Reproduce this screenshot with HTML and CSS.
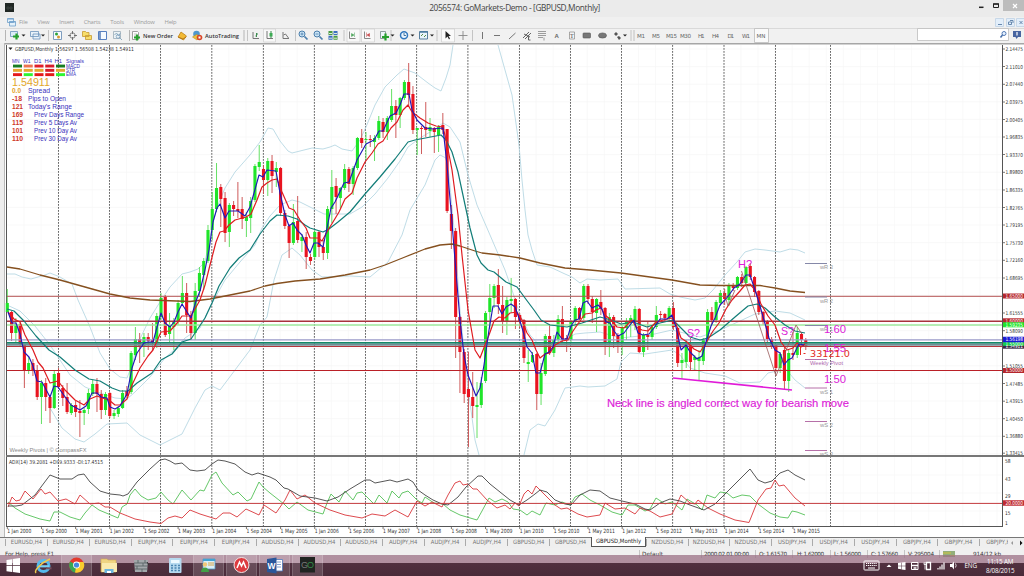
FILE: index.html
```html
<!DOCTYPE html>
<html lang="en">
<head>
<meta charset="utf-8">
<title>2056574: GoMarkets-Demo - [GBPUSD,Monthly]</title>
<link rel="stylesheet" href="styles.css">
</head>
<body>
<div class="app">
  <header class="titlebar">
    <svg class="app-icon" width="9" height="9" viewBox="0 0 9 9"><rect width="9" height="9" fill="#202724"/><path d="M2 4h2v2H2zM5 4h2v2H5z" fill="none" stroke="#47524d" stroke-width=".6"/></svg>
    <h1 class="title">2056574: GoMarkets-Demo - [GBPUSD,Monthly]</h1>
    <svg class="window-buttons" width="49" height="12" viewBox="975 0 49 12"><path d="M979 7.3h4.500" stroke="#222" stroke-width="1.500"/><path d="M993.500 4h5v3.500h-5z" fill="none" stroke="#222"/><path d="M993 4h6" stroke="#222" stroke-width="1.400"/><rect x="1003" y="0" width="21" height="11" fill="#bcbcbc"/><path d="M1013 4l4 4m0-4l-4 4" stroke="#fff" stroke-width="1.200"/></svg>
  </header>
  <nav class="menubar">
    <svg class="mdi-icon" width="9" height="9" viewBox="0 0 9 9"><path d="M.5.5h6v4h-6zM2.500 3.500h6v4.500h-6z" fill="#e4f1fa" stroke="#6f9fc8" stroke-width=".8"/><path d="M.5 1h6M2.500 4h6" stroke="#6fa0cf"/></svg>
    <span>File</span><span>View</span><span>Insert</span><span>Charts</span><span>Tools</span><span>Window</span><span>Help</span>
    <svg class="mdi-buttons" width="29" height="9" viewBox="995 17 29 9"><path d="M995.500 17.500h8v8h-8zM1006.500 17.500h8v8h-8zM1016.500 17.500h8v8h-8z" fill="#e2eefa" stroke="#bfd2e5" stroke-width=".8"/><path d="M998 23.500h4M1010 19.500h3v2.500M1008.500 21h3v2.500h-3zM1019.500 20l3 3m0-3l-3 3" fill="none" stroke="#5b7da5" stroke-width=".9"/></svg>
  </nav>
  <div class="toolbar">
    <svg class="group" width="245" height="15" viewBox="0 28 245 15">
      <path d="M5.500 30v11M129.500 30v11M244 30v11" stroke="#b5b5b5"/>
      <path d="M10.500 31.500h7v5h-7z" fill="#dcecf8" stroke="#6b93bb" stroke-width=".8"/><path d="M13 36.500h6M16.500 33.500v6" stroke="#27a02d" stroke-width="2.200"/>
      <path d="M21.500 34.500h4l-2 2zM41 34.500h4l-2 2z" fill="#222"/>
      <path d="M30.500 31.500h8v5h-8zM33 34h7v5h-7z" fill="#e8f2fa" stroke="#6b93bb" stroke-width=".8"/>
      <path d="M48.500 30v11" stroke="#c4c4c4"/>
      <path d="M53.500 31.500h8v8h-8z" fill="#f6fbff" stroke="#7e9dbe"/><circle cx="56.500" cy="34" r="1.500" fill="#2ba339"/><circle cx="58.500" cy="37" r="1.500" fill="#d99a31"/>
      <circle cx="72.500" cy="35.500" r="2.700" fill="none" stroke="#777" stroke-width=".9"/><path d="M72.500 31v3m0 3v3M68 35.500h3m3 0h3" stroke="#666" stroke-width=".9"/>
      <path d="M82.500 31.500h3l1 1h2.500v4h-6.500zM85.500 35.500h6v4h-6z" fill="#f8de6a" stroke="#c69b31" stroke-width=".8"/>
      <path d="M98.500 31.500h8v8h-8z" fill="#f5faff" stroke="#567fc0"/><path d="M100 32v7" stroke="#5279b5" stroke-width="1.500"/>
      <path d="M113.500 31.500h7v7h-7z" fill="#edf3f6" stroke="#9aabb7" stroke-width=".8"/><path d="M114.500 35l2-2 2 3 2-3M119 37l3 3" fill="none" stroke="#8eabc0"/><circle cx="118" cy="36.500" r="1.800" fill="none" stroke="#7fa2c0" stroke-width=".8"/>
      <path d="M132.500 31.500h5l1 1v7h-6z" fill="#fff" stroke="#888" stroke-width=".8"/><path d="M134 34h3m-3 2h2" stroke="#999" stroke-width=".6"/><path d="M134 37.500h6M137 34.500v6" stroke="#27a02d" stroke-width="2.200"/>
      <text x="143" y="37.800" textLength="30" lengthAdjust="spacingAndGlyphs" class="tool-text">New Order</text>
      <path d="M178 37l3-5 5.500 4-3 4z" fill="#f2ba35" stroke="#bc8118" stroke-width=".8"/><path d="M178 37l5 2 3-2" fill="none" stroke="#a96b11" stroke-width=".8"/>
      <circle cx="196.500" cy="34" r="3.300" fill="#4f98cd"/><path d="M192.500 37l4-2.500 4 2-3.500 3.500z" fill="#ecc23e" stroke="#b78a20" stroke-width=".6"/><circle cx="199.500" cy="37.500" r="2.800" fill="#d94628"/><path d="M198.500 36.500h2v2h-2z" fill="#fff"/>
      <text x="205" y="37.800" textLength="34" lengthAdjust="spacingAndGlyphs" class="tool-text">AutoTrading</text>
    </svg>
    <svg class="group" width="195" height="15" viewBox="245 28 195 15">
      <path d="M247.500 30v11M295.500 30v11M344 30v11M391 30v11M437 30v11" stroke="#c0c0c0" stroke-width=".9"/>
      <path d="M263.500 29h12v13h-12zM347 29h13v13h-13zM361.500 29h13v13h-13z" fill="#f8f8f8" stroke="#cfcfcf" stroke-width=".7"/>
      <path d="M253 32v6.500h6" fill="none" stroke="#777"/><path d="M256.500 33v4M255.500 36h1M256.500 34h1.500" stroke="#3d8b50"/>
      <path d="M267 31v7.500h6" fill="none" stroke="#777"/><path d="M271 31v7" stroke="#358b48"/><path d="M269.500 33h3v3.500h-3z" fill="#3dab54"/>
      <path d="M283 32v6.500h6M283.500 35l2-1 3 4" fill="none" stroke="#777"/>
      <g fill="#cae4f5" stroke="#4b7fad"><circle cx="302" cy="34" r="3"/><path d="M304.500 36.500l3 3" stroke-width="1.700"/><circle cx="317" cy="34" r="3"/><path d="M319.500 36.500l3 3" stroke-width="1.700"/><path d="M300.500 34h3m-1.500-1.500v3M315.500 34h3" stroke-width=".8"/></g>
      <path d="M328.500 31h4v4h-4zM333.500 35.800h4v4h-4z" fill="#499a43"/><path d="M333.500 31h4v4h-4zM328.500 35.800h4v4h-4z" fill="#3c70bf"/><path d="M329 33.500h3m2 0h3m-8 4.700h3m2 0h3" stroke="#dcebd7"/>
      <path d="M349.500 31.500V38.500h6M364.500 31.500V38.500h6" fill="none" stroke="#888"/><path d="M351.500 33.500l2.500 1.500-2.500 1.500zM354.500 32.500v4.500" fill="#48a357" stroke="#48a357" stroke-width=".5"/><path d="M369.500 33.500l-2.500 1.500 2.500 1.500zM366.500 32.500v4.500" fill="#c54245" stroke="#c54245" stroke-width=".5"/>
      <path d="M380.500 31.500h5v7h-5z" fill="#eff5fb" stroke="#788" stroke-width=".8"/><path d="M382 37h7M385.500 33.500v7" stroke="#27a02d" stroke-width="2.200"/>
      <circle cx="404" cy="35.300" r="3.500" fill="#eaf5ff" stroke="#3378bd" stroke-width="1.500"/><path d="M404 33v2.500h2" fill="none" stroke="#245989" stroke-width=".8"/>
      <path d="M419.500 31.500h8v7.500h-8z" fill="#e9f4fb" stroke="#577f9e"/><path d="M420 32h8" stroke="#487aa0" stroke-width="1.500"/><path d="M421 36l2-2m1 3 2-2" stroke="#578d4a"/>
      <path d="M390.500 34.500h4l-2 2zM410.500 34.500h4l-2 2zM430 34.500h4l-2 2z" fill="#222"/>
    </svg>
    <svg class="group" width="192" height="15" viewBox="440 28 192 15">
      <path d="M441.500 29h13v13h-13z" fill="#fafafa" stroke="#cdcdcd" stroke-width=".7"/><path d="M445.500 31v7.500l2-2 1.500 3 1-1-1.500-2.500h2.500z" fill="#222"/>
      <path d="M463 31v9M458.500 35.500h9" stroke="#888" stroke-width=".9"/><path d="M472.500 30v11M631 30v11" stroke="#c4c4c4"/>
      <path d="M482.500 32v7M494 35.500h6M509 39l6.500-6" stroke="#666" stroke-width=".9"/>
      <path d="M523 38l6-6M525 39l6-6M524 34l6 3M528.500 36.500v3.500h2" fill="none" stroke="#555" stroke-width=".9"/>
      <path d="M538 31.500h8M538 33.500h8M538 35.500h8M538 37.500h5M544 37.500v3" stroke="#777" stroke-width=".7"/>
      <text x="554.500" y="38" class="tool-glyph">A</text><path d="M569.500 32h5v7h-5z" fill="#f4f4f4" stroke="#888" stroke-width=".7"/><text x="570" y="38" class="tool-small">T</text>
      <rect x="583" y="33" width="7.500" height="5" rx=".8" fill="#777" stroke="#555" stroke-width=".6"/><ellipse cx="602.500" cy="35.500" rx="4" ry="2.600" fill="#777" stroke="#555" stroke-width=".6"/>
      <path d="M614 34l2-2 2 2-2 2zM617 37l2-1 2 2-2 2z" fill="#555"/><path d="M623 34.500h4l-2 2z" fill="#222"/>
    </svg>
    <svg class="group" width="140" height="15" viewBox="632 28 140 15">
      <path d="M634 30v11" stroke="#c0c0c0"/><path d="M754.500 28.500h14v14h-14z" fill="#fafafa" stroke="#bbb" stroke-width=".8"/>
      <g class="period"><text x="637" y="37.500" textLength="8">M1</text><text x="652" y="37.500" textLength="8">M5</text><text x="666" y="37.500" textLength="11">M15</text><text x="680" y="37.500" textLength="11">M30</text><text x="698" y="37.500" textLength="6.500">H1</text><text x="712" y="37.500" textLength="7">H4</text><text x="727.500" y="37.500" textLength="6.500">D1</text><text x="742" y="37.500" textLength="8">W1</text><text x="756.500" y="37.500" textLength="9">MN</text></g>
    </svg>
    <svg class="group search" width="107" height="15" viewBox="917 28 107 15"><path d="M917.500 28.500h91v12h-91z" fill="#fff" stroke="#bdbdbd" stroke-width=".8"/><circle cx="1004" cy="33.500" r="2" fill="#e6f2ff" stroke="#5379b5"/><path d="M1002.500 35l-2 2.500" stroke="#456da8" stroke-width="1.500"/><path d="M1013 31h8v6h-3l-1.500 2-1-2H1013z" fill="#4865a0"/><path d="M1017 32v3.500" stroke="#fff" stroke-width="1.200"/></svg>
  </div>
  <main><svg id="chart" class="chart" width="1024" height="495" viewBox="0 43 1024 495"></svg></main>
  <div class="tabs">
    <div class="tabs-left"><span>EURUSD,H4</span><span>EURUSD,H4</span><span>EURUSD,H4</span><span>EURJPY,H4</span><span>EURJPY,H4</span><span>EURJPY,H4</span><span>AUDUSD,H4</span><span>AUDUSD,H4</span><span>AUDUSD,H4</span><span>AUDJPY,H4</span><span>AUDJPY,H4</span><span>AUDJPY,H4</span><span>GBPUSD,H4</span><span>GBPUSD,H4</span></div>
    <b class="tab-active">GBPUSD,Monthly</b>
    <div class="tabs-right"><span>NZDUSD,H4</span><span>NZDUSD,H4</span><span>NZDUSD,H4</span><span>USDJPY,H4</span><span>USDJPY,H4</span><span>USDJPY,H4</span><span>GBPJPY,H4</span><span>GBPJPY,H4</span><span>GBPJPY,H4</span></div>
    <svg class="tab-arrows" width="15" height="10" viewBox="0 0 15 10"><path d="M4 3v4L2 5z" fill="#999"/><path d="M11 2.500v5L13.500 5z" fill="#111"/></svg>
  </div>
  <footer class="status">
    <svg width="1024" height="15" viewBox="0 548 1024 15" class="status-text">
      <text x="5" y="556" textLength="49">For Help, press F1</text><text x="642" y="556" textLength="21">Default</text><text x="704" y="556" textLength="45">2000.02.01 00:00</text><text x="759" y="556" textLength="28">O: 1.61570</text><text x="797" y="556" textLength="27">H: 1.62000</text><text x="834" y="556" textLength="27">L: 1.56000</text><text x="871" y="556" textLength="27">C: 1.57660</text><text x="908" y="556" textLength="26">V: 295004</text><text x="973" y="556" textLength="28">914/12 kb</text>
      <path d="M639.500 550v8M701.500 550v8M755.500 550v8M792.500 550v8M830.500 550v8M867.500 550v8M904.500 550v8M939.500 550v8" stroke="#c4c4c4"/>
      <path d="M944 551v6m2-6v6m2-6v6m2-6v6m2-6v6m2-6v6" stroke="#55832d" stroke-width="1.200"/><path d="M943 553h8m-1 2.500h5" stroke="#d2c43c"/>
    </svg>
  </footer>
  <div class="taskbar">
    <svg width="325" height="21" viewBox="0 555 325 21">
      <path d="M61 555h31v21H61zM193 555h31v21h-31zM226 555h31v21h-31zM259 555h31v21h-31zM292 555h31v21h-31z" fill="#fff" opacity=".14"/><path d="M61.500 555v21M91.500 555v21M193.500 555v21M223.500 555v21M226.500 555v21M256.500 555v21M259.500 555v21M289.500 555v21M292.500 555v21M322.500 555v21" stroke="#fff" opacity=".22" stroke-width=".7"/>
      <path d="M6.500 560l5.500-.8v6H6.500zM12.700 559l7.300-1v7.200h-7.300zM6.500 566h5.500v6l-5.500-.8zM12.700 566H20v7l-7.300-1z" fill="#fff"/>
      <circle cx="43.500" cy="566" r="5.500" fill="none" stroke="#55b9ec" stroke-width="3"/><path d="M39 566.300h10" stroke="#79d1f5" stroke-width="2.200"/><path d="M46 568.300h5.500" stroke="#74505f" stroke-width="2"/><path d="M36 573c-2-2 4-10 14-14" fill="none" stroke="#efc84d" stroke-width="1.500"/>
      <circle cx="76.500" cy="565" r="7.500" fill="#e33a2c"/><path d="M76.500 565L70 561.500A7.500 7.500 0 0 0 75.500 572.500z" fill="#36a852"/><path d="M76.500 565L75 572.500A7.500 7.500 0 0 0 83.500 562H77z" fill="#f8cd2e"/><circle cx="76.500" cy="565" r="3.400" fill="#fff"/><circle cx="76.500" cy="565" r="2.600" fill="#4289dd"/>
      <path d="M101 559h6l1 1h8v12h-15z" fill="#efd482" stroke="#d0a950" stroke-width=".6"/><path d="M102 563h15v9h-15z" fill="#faeaae"/><path d="M104.500 569h9v4h-9z" fill="#6cb5de"/><path d="M107 571h4v2h-4z" fill="#fff"/>
      <path d="M134 560h14l-1 12h-12z" fill="#a3a8ab"/><path d="M134 563h14m-14 3h14m-13 3h13M138 560v3m5 0v3m-6 0v3m5 0v3m3-12v3" stroke="#5a6468" stroke-width=".9"/><path d="M147 562l2 3m-15 5l-1 1" stroke="#333"/>
      <rect x="169" y="558" width="12.500" height="15" rx="1" fill="#b6d9ef"/><path d="M171 560h8.500v3H171z" fill="#eef9ff"/><path d="M171 565.500h2m1.500 0h2m1.500 0h2m-9 2.500h2m1.500 0h2m1.500 0h2m-9 2.500h2m1.500 0h2m1.500 0h2" stroke="#4a83b0" stroke-width="1.300"/>
      <path d="M203 559h12v10h-12z" fill="#d9eff9" stroke="#4e97c3" stroke-width=".8"/><path d="M203 560h12" stroke="#42a3d4" stroke-width="2"/><path d="M208 563h6m-6 2h6" stroke="#d8a54b"/><circle cx="205" cy="564.500" r="2.200" fill="#f0c778"/><path d="M201 572c0-6 8-6 8 0z" fill="#42a045"/>
      <circle cx="241.500" cy="565" r="7.500" fill="#dc3b40" stroke="#f2e5e5"/><path d="M237 568l2.500-6 2 4 2-4 2.500 6" fill="none" stroke="#fff" stroke-width="1.500"/>
      <path d="M275 559.500h7.500v11.500H275z" fill="#fff" stroke="#4c78bb" stroke-width=".8"/><path d="M277 562h4m-4 2.500h4m-4 2.500h4" stroke="#6489c1" stroke-width=".8"/><path d="M267 559l9.500-1.500v16l-9.500-1.500z" fill="#2b579a"/><text x="267.600" y="568.800" class="word">W</text>
      <rect x="300" y="557" width="15" height="15.500" fill="#202421"/><text x="301" y="568" textLength="13" class="go"><tspan fill="#777">G</tspan><tspan fill="#348b4a">O</tspan></text>
    </svg>
    <svg class="tray" width="165" height="21" viewBox="859 555 165 21">
      <rect x="864" y="561" width="15" height="9" rx=".7" fill="none" stroke="#fff"/><path d="M866 563.500h11m-11 2h11" stroke="#fff" stroke-dasharray="1.200 .7"/><path d="M868 568h7" stroke="#fff"/>
      <path d="M886.500 567l2.500-2.500 2.500 2.500z" fill="#fff"/><path d="M898 563l3-.5v3.200h-3zM901.500 562.400l4-.5v3.800h-4zM898 566.200h3v3l-3-.4zM901.500 566.200h4v3.800l-4-.6z" fill="#fff"/>
      <path d="M911.500 562.500h6.500v7h-6.500z" fill="none" stroke="#fff"/><path d="M911.500 565.500h6.500M913.500 568h3" fill="none" stroke="#fff" stroke-width="1.300"/><path d="M926.500 562.500h4v7h-4z" fill="none" stroke="#fff" stroke-width="1.300"/><path d="M925 562v3.500m-1-3v2h2m-1 1v4" fill="none" stroke="#fff" stroke-width=".8"/>
      <path d="M938 569.500v-1.500m2 1.500v-3m2 3v-5m2 5v-7" stroke="#fff" stroke-width="1.200"/><path d="M950 564h2l2-2.500v8l-2-2.500h-2z" fill="#fff"/><path d="M955.500 563.500q1.200 2 0 4" fill="none" stroke="#fff" stroke-width=".8"/>
      <g class="tray-text"><text x="964.500" y="568" textLength="12.500">ENG</text><text x="987" y="564" textLength="26.500">11:15 AM</text><text x="986" y="573" textLength="28.500">8/08/2015</text></g>
    </svg>
  </div>
</div>
<script src="chart.js"></script>
</body>
</html>
```

FILE: styles.css
```css
* { box-sizing: border-box; }
body { margin: 0; background: #ececec; font-family: "Open Sans", "Noto Sans", sans-serif; }
svg { display: block; flex: none; }
.app { width: 1024px; height: 576px; overflow: hidden; display: flex; flex-direction: column; }
.titlebar { height: 17px; flex: none; display: flex; align-items: flex-start; justify-content: space-between; background: #ebebeb; padding-left: 5px; }
.app-icon { margin-top: 3px; margin-right: 40px; }
.title { margin: 0; padding-top: 2px; font-size: 8.3px; line-height: 12px; letter-spacing: -.35px; font-weight: 400; color: #444; white-space: nowrap; width: 172px; text-align: center; }
.menubar { height: 11px; flex: none; display: flex; align-items: center; background: #f0f0f0; padding-left: 7px; font-size: 5.9px; line-height: 9px; letter-spacing: -.2px; color: #9b9b9b; }
.menubar span { margin-right: 9.8px; }
.mdi-icon { margin-right: 3px; }
.mdi-buttons { margin-left: auto; }
.toolbar { height: 15px; flex: none; display: flex; background: #f1f1f1; border-top: 1px solid #d9d9d9; }
.group { height: 15px; margin-top: -1px; }
.search { margin-left: auto; }
.tool-text { font: 600 6px "Open Sans", sans-serif; fill: #333; }
.tool-glyph { font: bold 6px "Liberation Sans", sans-serif; fill: #666; }
.tool-small { font: 6px "Liberation Serif", serif; fill: #444; }
.period { font: 5.6px "DejaVu Sans", sans-serif; fill: #666; }
.chart { background: #fff; }
.chart text { font-family: "DejaVu Sans Condensed", "DejaVu Sans", sans-serif; font-size: 5.3px; fill: #333; }
.chart .arial { font-family: "Liberation Sans", Arial, sans-serif; }
.chart .box-label { fill: #fff; }
.candles-up, .candles-down { shape-rendering: geometricPrecision; }
.tabs { height: 11px; flex: none; display: flex; background: #efefef; border-top: 1px solid #777; padding-left: 5px; font: 5.9px "DejaVu Sans Condensed", "DejaVu Sans", sans-serif; color: #777; line-height: 9px; margin-top: -1px; }
.tabs-left { width: 586px; display: flex; }
.tabs-right { width: 362px; display: flex; overflow: hidden; }
.tabs span { flex: 0 0 41.6px; text-align: center; white-space: nowrap; border-left: 1px solid #aaa; height: 7px; margin-top: 1px; line-height: 7px; }
.tabs-left span { flex: 1; }
.tab-active { width: 55px; background: #fff; border: 1px solid #555; border-top: 0; text-align: center; font-weight: 400; color: #222; font-size: 5.9px; height: 10px; line-height: 9px; white-space: nowrap; margin-top: -1px; }
.tab-arrows { margin-left: auto; }
.status { height: 15px; flex: none; background: #f0f0f0; }
.status-text { font: 5.7px "DejaVu Sans", sans-serif; fill: #333; }
.taskbar { height: 21px; flex: none; display: flex; justify-content: space-between; margin-top: -8px; position: relative; background: linear-gradient(rgba(155, 112, 133, .75) 0, rgba(155, 112, 133, .75) 8px, #51303f 8px, #492b39 100%); }
.tray-text { font: 6.3px "Open Sans", sans-serif; fill: #fff; }
.word { font: bold 8.500px "Liberation Sans", sans-serif; fill: #fff; }
.go { font: 9px "Liberation Sans", sans-serif; }
```

FILE: chart.js
```js
const NS = "http://www.w3.org/2000/svg";
const chart = document.getElementById("chart");
const STEP = 4.27, LEFT = 7;

function add(tag, attrs, text) {
  const node = document.createElementNS(NS, tag);
  for (const key in attrs) node.setAttribute(key, attrs[key]);
  if (text !== undefined) node.textContent = text;
  chart.appendChild(node);
}
function path(d, stroke, width, extra) {
  add("path", Object.assign({ d, stroke, "stroke-width": width, fill: "none" }, extra));
}
function series(points, stroke, width) {
  add("polyline", { points, stroke, "stroke-width": width, fill: "none", "stroke-linejoin": "round" });
}
function label(x, y, text, length, style, cls) {
  add("text", { x, y, textLength: length, lengthAdjust: "spacingAndGlyphs", style: style || "", class: cls || "" }, text);
}

// Window frame and faint grid
add("rect", { x: 0, y: 43, width: 1024, height: 495, fill: "#fff" });
add("rect", { x: 0, y: 43, width: 5, height: 495, fill: "#ededed" });
path("M4 43.500H1024", "#a6a6a6", 2);
path("M4.500 43V537", "#b9b9b9", 1);
path("M6.500 45V526", "#555", 1);
for (let x = 24; x < 1002; x += 17.07) path(`M${x} 45V526`, "#f7f7f7", .7);
for (let y = 49; y < 455; y += 17.6) path(`M7 ${y}H1002`, "#f7f7f7", .7);
for (const y of [475, 493, 511]) path(`M7 ${y}H1002`, "#f7f7f7", .7);

// Session separators, one per year
for (const x of [58.5, 109.5, 160.5, 211.8, 263.4, 314.4, 365.5, 416.6, 467.9, 519.5, 570.5, 621.5, 672.6, 724, 775.5, 830.5])
  path(`M${x} 45V526`, "#6a6a6a", 1, { "stroke-dasharray": "1.8 1.2" });

// Bands
const band = "#b8d8e3";
series("7,274 15,274 22,277 31,279 45,275 50,273 60,277 72,284 78,300 90,327 100,353 110,369 120,377 127,378 132,365 137,345 150,318 160,302 170,287 182,274 190,272 198,269 205,262 213,222 218,205 225,188 235,172 250,155 260,142 268,128 273,129 280,141 288,151 292,153 300,151 312,148 323,149 330,147 335,145 342,149 352,151 360,140 366,127 375,105 385,87 391,81 397,75 404,69 415,73 428,83 435,88 441,91 446,78 450,65 453,45", band, .9);
series("498,45 505,70 512,95 519,145 522,180 525,210 528,235 532,250 537,265 550,267 565,274 572,277 580,283 587,279 600,280 618,279 625,289 660,288 670,294 680,297 695,300 705,298 713,290 725,275 737,262 745,252 755,249 765,250 780,252 790,249 798,250 805,253", band, .9);
series("7,305 20,311 35,326 50,345 70,375 85,387 100,393 115,398 127,399 135,392 150,377 165,358 175,349 185,338 200,328 210,307 225,280 240,262 255,245 262,228 270,216 280,205 292,200 300,202 312,208 324,214 350,214 362,207 375,194 388,178 400,161 408,147 420,138 435,129 443,123 450,127 460,142 468,175 477,205 490,235 505,270 512,290 520,315 530,335 540,346 550,345 565,340 575,334 585,333 600,332 620,338 650,335 672,330 700,337 720,330 740,321 755,314 775,311 790,313 805,320", band, .9);
series("50,408 62,428 75,439 84,442 95,434 107,424 127,423 140,435 160,445 168,441 182,434 195,408 205,390 212,386 220,390 235,370 250,350 260,325 267,317 274,280 282,255 292,248 300,255 312,270 322,277 350,276 370,277 388,262 402,235 410,210 425,185 435,160 440,155 446,158 449,175 455,240 460,310 467,380 475,440 479,455", band, .9);
series("524,455 530,430 538,424 545,426 555,410 565,388 580,386 588,387 605,386 617,379 621,362 630,353 645,354 672,350 680,355 690,368 705,373 725,376 740,383 760,382 768,373 777,371 785,368 795,380 805,388", band, .9);

// Monthly candles: high, body top, body bottom, low, direction
const candles = `289 303 312 312 g|311 312 333 341 r|318 324 333 342 g|323 324 345 347 r|345 345 370 388 r|357 363 370 374 g|359 363 371 376 r|365 370 397 400 r|380 383 397 424 g|378 383 397 411 r|395 397 408 423 r|371 374 408 409 g
368 373 387 389 r|385 388 398 406 r|383 397 412 414 r|403 405 413 415 g|401 405 412 417 r|400 411 413 437 r|408 410 413 425 g|389 393 409 414 g|380 384 394 396 g|378 384 394 412 r|390 394 410 419 r|392 394 410 415 g
392 393 416 418 r|410 413 416 419 g|406 408 414 417 g|390 393 408 409 g|386 391 396 398 r|351 353 392 394 g|327 339 355 360 g|333 339 346 363 r|333 337 346 357 g|333 337 341 350 r|323 340 343 351 r|313 316 342 348 g
293 298 317 320 g|295 297 335 337 r|313 325 334 343 g|318 322 327 350 g|300 303 322 325 g|276 293 303 306 g|283 293 315 333 r|311 315 333 340 r|283 291 333 340 g|267 273 291 297 g|258 261 275 290 g|225 230 261 263 g
192 209 230 240 g|163 188 209 212 g|184 187 199 227 r|192 198 233 242 r|203 205 232 247 g|201 205 209 216 r|182 209 211 218 r|197 209 219 229 r|212 217 221 237 g|197 201 218 233 g|164 166 200 202 g|145 162 167 171 g
165 169 180 194 r|158 161 180 196 g|155 161 176 193 r|162 168 172 187 g|167 168 213 216 r|210 213 226 229 r|224 226 243 258 r|204 222 243 245 g|196 221 240 243 r|234 237 241 252 g|232 237 257 269 r|254 257 261 265 r
230 232 257 260 g|231 232 247 257 r|240 247 253 260 r|206 209 253 259 g|170 187 209 223 g|178 186 197 214 r|187 188 198 208 g|164 169 188 190 g|167 169 184 192 r|166 168 184 195 g|137 138 168 170 g|129 138 143 148 r
132 139 140 160 g|135 139 140 147 r|135 138 142 161 g|116 121 138 140 g|118 122 132 138 r|116 118 132 140 g|89 106 120 122 g|100 106 115 138 r|97 98 115 128 g|80 82 98 100 g|63 82 95 107 r|86 94 130 134 r
128 128 130 155 g|126 128 129 154 r|102 127 130 137 r|118 127 131 137 g|127 128 132 153 r|125 127 135 152 g|113 125 130 134 r|129 129 211 213 r|205 214 231 249 r|228 231 317 358 r|316 317 352 393 r|349 352 394 403 r
352 389 397 447 r|372 397 406 418 r|382 405 407 438 g|377 383 405 408 g|311 313 381 383 g|284 298 312 329 g|284 286 298 308 g|269 285 304 314 r|286 305 322 333 r|297 300 322 335 g|278 299 301 313 g|298 299 317 329 r
313 315 322 328 r|319 320 358 363 r|350 362 364 382 g|352 355 362 363 g|353 354 394 410 r|363 373 394 405 g|334 336 374 376 g|325 336 353 355 r|335 340 353 357 g|315 319 340 345 g|306 319 340 343 r|335 338 340 352 r
320 322 340 343 g|306 308 322 327 g|307 308 319 320 r|284 286 318 320 g|284 286 299 304 r|296 299 312 323 r|298 299 313 332 g|290 302 308 315 r|307 308 343 355 r|313 317 343 357 g|315 317 336 348 r|333 335 343 353 r
325 327 343 355 g|318 322 328 340 g|315 318 323 337 g|306 309 322 330 g|308 309 352 353 r|333 335 352 357 g|322 335 337 350 r|325 327 337 340 g|306 315 327 329 g|311 314 315 320 r|313 314 318 321 r|306 308 318 322 g
302 308 327 330 r|327 328 363 367 r|353 360 363 379 g|340 345 362 368 g|338 345 362 370 r|355 357 360 371 g|350 357 361 380 g|338 340 361 365 g|309 312 340 342 g|307 312 320 325 r|300 302 320 323 g|290 293 303 306 g
289 293 299 305 r|283 285 300 306 g|283 285 288 291 r|276 277 288 290 g|274 277 283 287 r|266 267 283 285 g|263 266 277 280 r|276 277 292 297 r|290 291 312 315 r|311 312 322 325 r|320 321 339 342 r|337 339 347 349 r
344 345 368 372 r|352 354 368 373 g|347 350 381 389 r|350 353 381 392 g|332 353 355 360 r|327 333 355 358 g|332 334 340 346 r|338 340 346 350 r`.split(/[|\n]/);
const shapes = { g: ["", ""], r: ["", ""] };
candles.forEach((row, i) => {
  const [high, top, bottom, low, dir] = row.split(" ");
  const x = (LEFT + .3 + i * STEP).toFixed(2);
  shapes[dir][0] += `M${x} ${high}V${low}`;
  shapes[dir][1] += `M${x} ${top}V${bottom}`;
});
path(shapes.g[0], "#55dd55", .9, { class: "candles-up" });
path(shapes.r[0], "#c84848", .9, { class: "candles-down" });
path(shapes.g[1], "#20e52a", 3.1, { class: "candles-up" });
path(shapes.r[1], "#e91420", 3.1, { class: "candles-down" });

// Price levels
for (const [y, color, width] of [[296.3, "#b45252", 1], [321.2, "#a8323c", 1.6], [325, "#9ee89c", 1.4], [339.9, "#9a9ac8", 1.2], [342.9, "#138768", 1.6], [344.8, "#708e96", 2], [346.5, "#b4373c", 1], [370.5, "#ba2027", 1.1]])
  path(`M7 ${y}H1002`, color, width);

// Moving averages
series("7,267 20,269 40,275 60,280 85,287 110,294 130,298 150,300 190,301.5 210,299 230,295 250,291 265,286 277,283.5 295,281 320,279 345,275 370,270 385,265 405,257 425,249 440,245 452,244 460,246 475,251 482,253 500,255 520,258 540,263 565,268 590,270 621,273 650,277 672,280 700,285 720,285.5 760,285.5 775,288 790,291 805,292.5", "#85501f", 1.3);
series("7,309 14,311 24,321 36,336 49,350 60,357 75,370 89,379 100,381 112,388 120,391 128,391 137,383 152,373 161,360 172,354 182,342 191,339 199,327 205,318 212,303 219,286 230,268 239,258 250,250 260,234 270,221 277,215 288,216 297,219 305,225 310,228 323,232 329,229 338,222 350,212 365,194 380,177 395,159 408,142 415,140 441,135 446,140 452,152 458,172 464,200 470,228 477,255 481,263 488,270 494,272 506,282 517,287 525,298 534,310 541,320 550,325 567,327 582,323 600,317 611,320 621,324 633,322 647,327 660,323 673,320 681,328 690,337 700,340 708,338 720,330 735,317 748,306 757,304 765,308 775,317 785,325 795,331 805,333", "#127d78", 1.2);
series("8,312 14,319 20,322 25,335 33,350 38,362 43,368 50,383 58,381 65,390 75,400 84,405 90,399 97,396 102,398 109,400 115,405 120,405 127,399 132,385 140,368 148,356 153,350 161,332 170,331 178,322 182,316 191,316 200,300 205,285 210,265 216,242 220,232 224,231 229,225 235,220 246,217 251,214 257,200 262,187 267,183 272,180 277,179 282,192 289,208 294,210 300,220 306,228 310,238 318,238 322,241 328,230 333,222 339,212 345,199 352,193 357,178 365,162 372,153 378,144 383,141 391,128 397,122 403,110 408,105 412,112 420,118 428,123 436,126 443,127 447,144 452,170 458,215 462,255 468,310 475,350 480,358 485,345 489,335 494,321 499,317 505,318 510,313 517,312 522,320 527,333 532,340 536,350 540,358 545,354 550,353 555,345 562,341 568,340 573,331 580,321 585,314 592,313 596,310 601,308 605,315 611,320 617,327 624,328 632,320 636,327 642,330 648,331 655,323 663,320 672,318 676,324 681,338 687,342 694,349 700,352 706,343 713,331 719,323 726,309 732,300 740,291 745,285 750,284 755,290 761,304 768,316 775,325 781,342 787,350 793,348 797,343 801,347 805,344", "#df1b20", 1.2);
series("8,312 12,323 16,323 20,334 24,352 29,357 33,366 37,381 42,382 50,397 54,386 58,387 63,394 71,405 80,410 86,406 92,393 97,393 101,397 107,398 110,407 115,409 120,406 127,394 132,368 137,353 144,343 148,342 153,342 156,331 161,313 165,323 170,327 174,322 178,312 182,304 187,312 191,318 196,301 200,291 205,270 209,250 213,222 217,208 220,204 225,218 229,211 238,211 245,216 250,207 254,193 259,175 263,177 267,170 276,171 280,193 285,215 289,226 293,223 297,230 302,235 306,245 310,253 314,243 318,243 323,247 327,228 331,208 335,202 344,183 349,182 357,160 366,144 374,140 379,131 383,131 390,116 396,113 400,105 404,94 409,94 412,110 417,120 425,128 433,129 443,128 447,165 451,210 455,260 460,320 464,355 468,375 476,396 480,388 484,365 489,330 493,306 498,306 502,314 506,307 511,304 515,307 519,318 523,331 527,347 532,353 536,373 540,373 545,354 549,352 553,347 557,332 562,339 567,339 571,326 575,320 579,319 583,303 587,301 592,308 598,305 602,309 606,322 610,323 614,331 618,336 624,333 630,325 634,320 638,333 643,335 649,334 654,328 660,319 667,319 672,315 676,327 681,350 686,345 690,352 697,359 702,356 706,342 711,326 715,318 720,305 725,300 729,295 734,288 740,284 746,275 750,275 755,290 760,306 764,320 769,338 775,350 780,353 784,365 788,360 792,358 796,350 799,344 804,345", "#2018b8", 1.15);

// Hand-drawn annotations and pivots
path("M741.500 271L776 376L796 325L802 334M724 292L728 306L735 290", "#985858", .8);
path("M673 378L792 390", "#e01bd8", 1.6);
for (const [y, text] of [[263.5, "wR 3"], [297, "wR 2"], [325.5, "wR 1"], [359.5, ""], [388, "wS 1"], [421.5, "wS 2"], [450.5, "wS 3"]]) {
  path(`M805 ${y}H827`, y < 340 ? "#8588a8" : "#b670a8", 1);
  if (text) label(820, y + 5.5, text, 13, "font-size:6px;fill:#999", "arial");
}
const pink = "font-size:10.5px;fill:#dc22d8";
label(738, 267.500, "H?", 14, pink, "arial");
label(687, 337, "S?", 13, pink, "arial");
label(781, 335, "S?", 13, pink, "arial");
label(824, 332.500, "1.60", 22, pink, "arial");
label(824, 352, "1.55", 22, pink, "arial");
label(824, 382.500, "1.50", 22, pink, "arial");
label(607, 406.500, "Neck line is angled correct way for bearish move", 242, "font-size:10.5px;fill:#dc22d8;stroke:#dc22d8;stroke-width:.15", "arial");
label(810, 356.500, "33121.0", 40, "font-family:'DejaVu Sans';font-size:8.5px;fill:#e22b22");
path("M803.500 353.500h2M800.500 347v8", "#e22b22", 1);
label(810, 365, "Weekly Pivot", 33, "font-size:5.500px;fill:#ad65ac", "arial");
label(9.500, 451.500, "Weekly Pivots | © CompassFX", 77, "font-size:5.800px;fill:#888", "arial");

// Signal panel
add("path", { d: "M8.500 47.500h4l-2 2.500z", fill: "#222" });
label(15, 50.500, "GBPUSD,Monthly  1.56297 1.56508 1.54238 1.54911", 119, "font-size:5.500px");
const navy = "#3a32bd";
[["MN", 12], ["W1", 23], ["D1", 34], ["H4", 44.5], ["H1", 54.5]].forEach(([t, x]) => label(x, 62.500, t, 7.500, "font-size:5.500px;fill:" + navy, "arial"));
label(66, 62.500, "Signals", 18, "font-size:6px;fill:" + navy, "arial");
[["MACD", 14], ["STR", 9], ["EMA", 10]].forEach(([t, w], i) => label(66, 67.800 + i * 4.2, t, w, "font-size:4.800px;fill:" + navy, "arial"));
[["#187c22", "#ed7450", "#e1202b", "#d71c2b", "#187c22"], ["#e6a72f", "#e6a72f", "#e6a72f", "#d71c2b", "#e6a72f"], ["#e41a1a", "#2df432", "#e41a1a", "#e41a1a", "#2df432"]].forEach((row, r) =>
  row.forEach((fill, c) => add("rect", { x: 13 + c * 10.75, y: 64.6 + r * 4.3, width: 9, height: 2.9, fill })));
label(12, 86, "1.54911", 38, "font-size:10.500px;fill:#e3a62a", "arial");
[["0.0", 12, 9, "#e2a12a", "Spread", 28, 22], ["-18", 12, 10, "#cf392a", "Pips to Open", 28, 38], ["121", 12, 11, "#cf392a", "Today's Range", 28, 44], ["169", 12, 11, "#cf392a", "Prev Days Range", 34, 50], ["115", 12, 11, "#cf392a", "Prev 5 Days Av", 34, 43], ["101", 12, 11, "#cf392a", "Prev 10 Day Av", 34, 43], ["110", 12, 11, "#cf392a", "Prev 30 Day Av", 34, 43]].forEach((r, i) => {
  const y = 93.4 + i * 8;
  label(r[1], y, r[0], r[2], "font-size:6.500px;font-weight:bold;fill:" + r[3], "arial");
  label(r[5], y, r[4], r[6], "font-size:6.800px;fill:" + navy, "arial");
});

// ADX pane
path("M6 456H1024", "#777", 1.8);
label(9, 463.800, "ADX(14) 39.2081 +DI:9.9333 -DI:17.4515", 94, "font-size:5.500px");
series("8,502 15,508 25,514 40,519 50,521 54,512 60,512 70,517 80,520 85,513 92,505 99,510 118,518 122,507 127,504 130,495 135,489 141,496 148,500 156,498 161,492 168,500 173,504 182,490 191,500 200,490 204,491 212,475 216,472 222,483 233,495 238,492 247,501 251,499 259,482 263,487 270,493 284,504 289,509 297,502 308,510 323,514 327,503 331,494 339,502 345,491 353,500 357,493 362,492 374,504 379,495 387,503 392,491 399,498 402,493 408,491 414,497 417,500 422,503 425,497 434,503 443,504 450,510 460,515 477,520 482,511 489,498 495,502 502,499 508,502 513,509 520,510 527,515 532,511 540,515 546,503 555,505 562,502 570,505 575,497 582,494 590,500 600,505 612,512 622,515 628,505 635,505 645,511 650,509 656,498 665,504 672,502 677,506 682,510 687,499 697,505 702,510 707,495 715,498 720,492 727,493 733,498 742,495 750,496 758,504 770,513 780,517 788,518 792,511 797,512 805,515", "#55c158", .9);
series("8,507 12,497 16,501 20,500 25,491 33,499 41,489 45,494 50,492 58,501 66,499 75,504 80,495 90,504 99,503 105,507 110,507 120,513 135,519 150,522 161,523.5 168,518 175,516 182,518 190,510 200,514 216,519 223,513 230,513 237,517 246,509 259,515 264,505 276,513 285,500 290,490 297,499 305,495 315,503 330,510 345,515 362,518 372,514 385,516 395,510 408,517 417,501 425,506 432,502 442,507 448,495 455,483 460,481 463,485 468,484 473,489 477,489 487,500 497,508 505,505 510,509 515,503 519,506 524,494 528,490 532,494 536,486 545,495 555,505 561,509 567,508 578,514 587,517 600,515 605,503 615,509 625,508 635,514 640,508 650,511 660,517 672,514 677,504 681,495 690,503 695,504 698,500 708,508 720,514 735,520 749,522.5 758,500 766,489 771,488 775,480 779,486 784,485 795,498 805,506", "#d9363a", .9);
series("8,506 16,506 22,505 35,495 50,475 55,477 60,479 72,479 78,475 84,474 90,482 100,491 110,494 120,495 123,496 128,494 137,482 150,469 160,460 165,459 170,461 175,464 182,463 190,470 197,471 205,470 212,464 218,460 225,461 235,464 245,472 252,475 258,473 270,477 276,480 284,488 288,489 300,496 315,498 327,501 338,497 350,489 365,480 370,480 375,483 390,480 397,482 408,479 413,482 418,490 425,495 433,500 442,504 448,505 458,497 466,487 478,476 482,476 490,484 500,492 510,500 519,505 527,500 535,494 540,490 547,492 555,500 565,504 571,505 580,495 590,490 600,491 610,498 622,501 635,504 645,509 650,510 660,503 670,499 680,501 690,505 704,510 715,504 725,494 740,479 750,469 758,480 765,483 772,481 780,473 788,470 795,475 805,480", "#444", .9);
path("M7 503.400H1002", "#c33a3d", 1);

// Price and time axes
path("M1002.500 45V526M6 526.500H1003", "#555", 1);
[["2.14475", 49], ["2.11010", 66.5], ["2.07440", 84.3], ["2.03975", 102], ["2.00405", 119.5], ["1.96835", 137], ["1.93370", 154.5], ["1.89800", 172.3], ["1.86335", 190], ["1.82765", 207.5], ["1.79195", 225], ["1.75730", 242.7], ["1.72160", 260.3], ["1.68695", 278], ["1.61555", 313], ["1.58090", 330.7], ["1.51055", 366], ["1.47485", 383.5], ["1.43915", 401.2], ["1.40450", 418.7], ["1.36880", 436.3], ["1.33415", 453.2]].forEach(([t, y]) => {
  path(`M1003 ${y}h2`, "#555", .8);
  label(1005.500, y + 2, t, 17.500, "");
});
[["58", 460.5], ["43", 479], ["29", 496], ["15", 513.3], ["1", 523]].forEach(([t, y]) => label(1005, y + 2, t, t.length * 2.8, ""));
[[296, "#b5262c", "1.65000", 5], [320.800, "#b5262c", "1.60000", 5], [324.8, "#20e52a", "1.59235", 5], [346.2, "#3b2747", "1.54911", 5], [343.800, "#17cf50", "1.55000", 4], [339.500, "#1a1ad2", "1.56198", 5.500], [370.500, "#b5262c", "1.50000", 5], [503, "#c02b32", "20.0000", 5.500]].forEach(([y, fill, t, h]) => {
  add("rect", { x: 1003, y: y - h / 2, width: 21, height: h, fill });
  label(1005.500, y + 1.9, t, 17.500, "", "box-label");
});
const months = ["Jan", "Sep", "May"];
for (let i = 0; i < 24; i++) {
  const x = LEFT + .3 + i * 8 * STEP;
  path(`M${x} 526v3`, "#555", .8);
  label(x, 533.400, `1 ${months[i % 3]} ${2000 + Math.floor(i * 8 / 12)}`, i % 3 === 2 ? 27 : i % 3 === 1 ? 25.5 : 24, "font-size:5.700px");
}
```
